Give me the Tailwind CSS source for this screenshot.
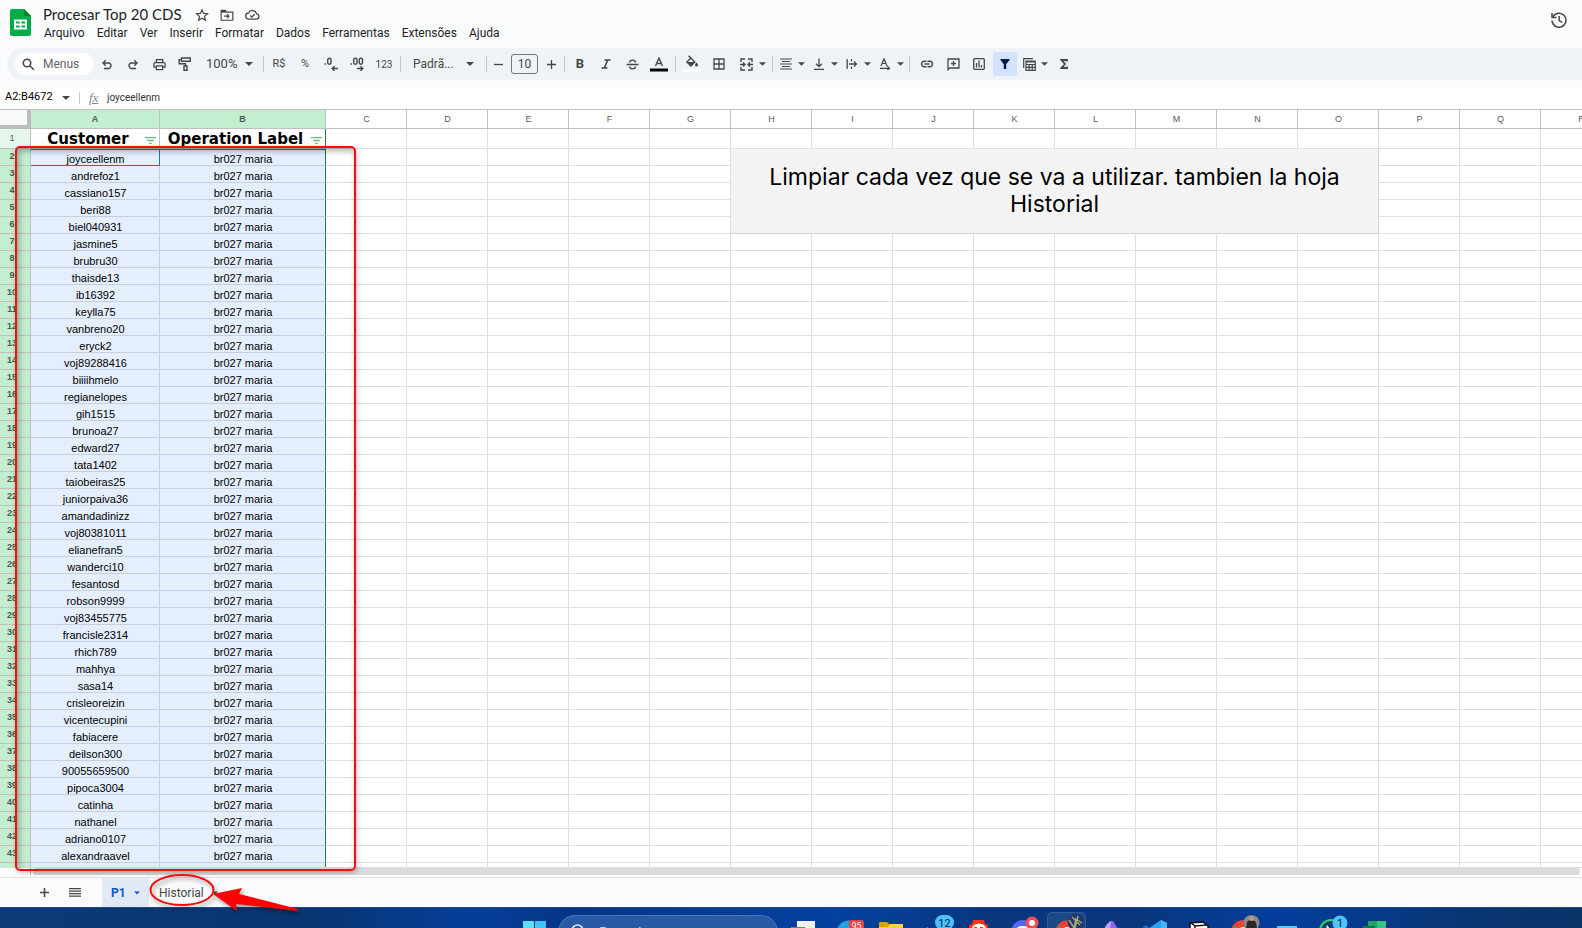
<!DOCTYPE html>
<html lang="pt-BR">
<head>
<meta charset="utf-8">
<title>Procesar Top 20 CDS</title>
<script src="https://cdn.jsdelivr.net/npm/@tailwindcss/browser@4"></script>
</head>
<body class="flex h-screen flex-col overflow-hidden bg-[#f9fbfd] font-['Roboto','Noto_Sans',sans-serif] text-[#444746]">

<svg class="hidden" aria-hidden="true">
  <symbol id="caret" viewBox="0 0 8 4"><path d="M0 0h8L4 4z" fill="currentColor"/></symbol>
  <symbol id="undo" viewBox="0 0 24 24"><path fill="currentColor" d="M7 21v-2.400h7.100q1.500 0 2.500-1t1-2.600-1-2.600-2.500-1H7.800l2.700 2.700L8.900 15.800 3.500 10.300 8.900 4.800l1.600 1.600L7.800 9.100h6.300q2.500 0 4.200 1.700T20 15t-1.700 4.300T14.100 21z"/></symbol>
  <symbol id="print" viewBox="0 0 24 24"><path fill="currentColor" d="M19 8h-1V3H6v5H5c-1.660 0-3 1.340-3 3v6h4v4h12v-4h4v-6c0-1.660-1.340-3-3-3zM8 5h8v3H8V5zm8 12v2H8v-4h8v2zm2-2v-2H6v2H4v-4c0-.55.45-1 1-1h14c.55 0 1 .45 1 1v4h-2z"/></symbol>
</svg>

<header class="flex h-12 shrink-0 items-start pl-[10px] pr-[15px]">
  <svg class="mt-[9px] h-[27px] w-[21px]" viewBox="0 0 21 27" role="img" aria-label="Planilhas"><path d="M2 0h12l7 7v18a2 2 0 0 1-2 2H2a2 2 0 0 1-2-2V2a2 2 0 0 1 2-2z" fill="#00ac47"/><path d="M14 0l7 7h-7z" fill="#00832d"/><path d="M4 10.500h13v10H4z" fill="#fff"/><path d="M6 12.500h3.700v2H6zm5.300 0H15v2h-3.700zM6 16.500h3.700v2H6zm5.300 0H15v2h-3.700z" fill="#00ac47"/></svg>
  <div class="flex flex-col pl-3 pt-1">
    <div class="flex h-5 items-center">
      <h1 class="w-[152px] font-[Lato,sans-serif] text-[15px] leading-5 text-[#1f1f1f]">Procesar Top 20 CDS</h1>
      <div class="flex items-center gap-[11px] pt-px">
        <button aria-label="Marcar com estrela"><svg class="block size-[14px]" viewBox="0 0 24 24" fill="none" stroke="currentColor" stroke-width="2"><path d="M12 3l2.600 6.300 6.900.6-5.200 4.500 1.600 6.700L12 17.500l-5.900 3.600 1.600-6.700L2.500 9.900l6.900-.6z"/></svg></button>
        <button aria-label="Mover"><svg class="block size-[14px]" viewBox="0 0 24 24" fill="none" stroke="currentColor" stroke-width="2"><path d="M2 4h7l2 3h11v14H2z"/><path d="M2 6h8" stroke-width="4"/><path d="M7 14h8M12 10.500l3.500 3.500-3.500 3.500"/></svg></button>
        <button aria-label="Ver status do documento"><svg class="block size-[15px]" viewBox="0 0 24 24" fill="none" stroke="currentColor" stroke-width="2"><path d="M6.500 19.500a5 5 0 0 1-.8-10A6.800 6.800 0 0 1 18.500 11a4.300 4.300 0 0 1 .3 8.500z"/><path d="M8.500 13.500l2.500 2.500 4.500-4.500"/></svg></button>
      </div>
    </div>
    <nav class="flex gap-3 pl-px text-[12px] leading-[19px] text-[#1f1f1f]">
      <button>Arquivo</button><button>Editar</button><button>Ver</button><button>Inserir</button><button>Formatar</button><button>Dados</button><button>Ferramentas</button><button>Extensões</button><button>Ajuda</button>
    </nav>
  </div>
  <button class="ml-auto mt-3" aria-label="Histórico de versões"><svg class="block size-4" viewBox="0 0 16 16" fill="none" stroke="currentColor" stroke-width="1.500"><path d="M1.800 5A7 7 0 1 1 1 8.500"/><path d="M1 1v4.500h4.500"/><path d="M8.200 4v4.500l3 2"/></svg></button>
</header>

<div class="ml-[7px] flex h-8 shrink-0 items-center rounded-l-full bg-[#eff3f8] pl-[7px] text-[12px]" role="toolbar" aria-label="Ferramentas">
  <label class="flex h-[22px] w-20 items-center gap-2 rounded-full bg-white pl-2">
    <svg class="size-[13px] shrink-0" viewBox="0 0 13 13" fill="none" stroke="currentColor" stroke-width="1.600"><circle cx="5" cy="5" r="3.700"/><path d="M7.800 7.800l4 4"/></svg>
    <input class="w-12 outline-none placeholder:text-[#5f6368]" placeholder="Menus" aria-label="Menus">
  </label>
  <div class="flex items-center">
    <button class="grid h-6 w-[26px] place-items-center" aria-label="Desfazer"><svg class="size-[14px]"><use href="#undo"/></svg></button>
    <button class="grid h-6 w-[26px] place-items-center" aria-label="Refazer"><svg class="size-[14px] -scale-x-100"><use href="#undo"/></svg></button>
    <button class="grid h-6 w-[26px] place-items-center" aria-label="Imprimir"><svg class="size-[15px]"><use href="#print"/></svg></button>
    <button class="grid h-6 w-[26px] place-items-center" aria-label="Pintar formatação"><svg class="size-[14px]" viewBox="0 0 14 14" fill="none" stroke="currentColor" stroke-width="1.400"><path d="M3.500 1h8.800v3.300H3.500zM3.500 2.600H1.200v4.200h6.300V9"/><path d="M6 9h3v4.300H6z"/></svg></button>
    <button class="flex h-6 w-[63px] items-center justify-between px-2 text-[13px]" aria-haspopup="listbox">100%<svg class="h-1 w-2"><use href="#caret"/></svg></button>
  </div>
  <span class="mx-[2px] h-4 w-px bg-[#c7c7c7]"></span>
  <div class="flex items-center text-[11px]">
    <button class="h-6 w-[26px]">R$</button>
    <button class="h-6 w-[26px]">%</button>
    <button class="grid h-6 w-[26px] place-items-center" aria-label="Diminuir casas decimais"><svg class="h-[14px] w-4" viewBox="0 0 16 14" fill="none" stroke="currentColor" stroke-width="1.400"><path d="M1.500 7h1.500"/><rect x="4.700" y="1.200" width="3.300" height="6" rx="1.600"/><path d="M15 11.500H9.500M11.500 9.200L9.200 11.500l2.300 2.300"/></svg></button>
    <button class="grid h-6 w-[26px] place-items-center" aria-label="Aumentar casas decimais"><svg class="h-[14px] w-4" viewBox="0 0 16 14" fill="none" stroke="currentColor" stroke-width="1.400"><path d="M1.500 7h1.500"/><rect x="4.700" y="1.200" width="3.300" height="6" rx="1.600"/><rect x="10.200" y="1.200" width="3.300" height="6" rx="1.600"/><path d="M8 11.500h5.500M11.500 9.200l2.300 2.300-2.300 2.300"/></svg></button>
    <button class="h-6 w-[28px] text-[10px]">123</button>
  </div>
  <span class="mx-[2px] h-4 w-px bg-[#c7c7c7]"></span>
  <button class="flex h-6 w-[81px] items-center justify-between px-[10px] text-[12px]" aria-haspopup="listbox">Padrã...<svg class="h-1 w-2"><use href="#caret"/></svg></button>
  <span class="mx-[2px] h-4 w-px bg-[#c7c7c7]"></span>
  <button class="grid h-6 w-[19px] place-items-center" aria-label="Diminuir fonte"><svg class="size-[9px]" viewBox="0 0 9 9" stroke="currentColor" stroke-width="1.300"><path d="M0 4.500h9"/></svg></button>
  <input class="mx-[3px] h-5 w-[27px] rounded-[3px] border border-[#747775] text-center text-[12px] text-[#444746] outline-none" value="10" aria-label="Tamanho da fonte">
  <button class="grid h-6 w-[21px] place-items-center" aria-label="Aumentar fonte"><svg class="size-[9px]" viewBox="0 0 9 9" stroke="currentColor" stroke-width="1.300"><path d="M0 4.500h9M4.500 0v9"/></svg></button>
  <span class="mx-[2px] h-4 w-px bg-[#c7c7c7]"></span>
  <button class="h-6 w-[26px] text-[13px] font-bold" aria-label="Negrito">B</button>
  <button class="grid h-6 w-[26px] place-items-center" aria-label="Itálico"><svg class="size-[10px]" viewBox="0 0 10 10" fill="none" stroke="currentColor" stroke-width="1.700"><path d="M3.500 1h6M.5 9h6M6.700 1L3.300 9"/></svg></button>
  <button class="grid h-6 w-[26px] place-items-center" aria-label="Tachado"><svg class="h-[11px] w-[13px]" viewBox="0 0 12 11" fill="none" stroke="currentColor" stroke-width="1.400"><path d="M0 5.500h12M9 3.500C8.800.3 3.200.3 3 3.500M3 7.500c.2 3.200 5.800 3.200 6 0"/></svg></button>
  <button class="grid h-6 w-[28px] place-items-center" aria-label="Cor do texto"><svg class="h-[15px] w-[18px]" viewBox="0 0 18 15"><path d="M5.500 9L9 1l3.500 8M6.700 6.500h4.600" fill="none" stroke="currentColor" stroke-width="1.400"/><path d="M0 11.500h18v3H0z" fill="#000"/></svg></button>
  <span class="mx-[2px] h-4 w-px bg-[#c7c7c7]"></span>
  <button class="grid h-6 w-[28px] place-items-center" aria-label="Cor de preenchimento"><svg class="h-[18px] w-[18px]" viewBox="0 0 18 18"><path d="M5.500.8l6.300 6.300-3.900 3.900L3.900 7.100 8 3" fill="none" stroke="currentColor" stroke-width="1.400"/><path d="M4 7h7.500L8 10.800z" fill="currentColor"/><path d="M13.500 7.500s1.500 1.700 1.500 2.500a1.500 1.500 0 0 1-3 0c0-.8 1.500-2.500 1.500-2.500z" fill="currentColor"/><path d="M0 14h18v3H0z" fill="#fff"/></svg></button>
  <button class="grid h-6 w-[26px] place-items-center" aria-label="Bordas"><svg class="size-3" viewBox="0 0 12 12" fill="none" stroke="currentColor" stroke-width="1.300"><path d="M1 1h10v10H1zM6 1v10M1 6h10"/></svg></button>
  <button class="flex h-6 w-[38px] items-center gap-[6px] pl-2" aria-label="Mesclar células"><svg class="size-[13px]" viewBox="0 0 13 13" fill="none" stroke="currentColor" stroke-width="1.400"><path d="M1 4V1h4M8 1h4v3M1 9v3h4M8 12h4V9M0 6.500h4.500M13 6.500H8.500M3 4.500l2 2-2 2M10 4.500l-2 2 2 2"/></svg><svg class="h-1 w-[7px]"><use href="#caret"/></svg></button>
  <span class="mx-[2px] h-4 w-px bg-[#c7c7c7]"></span>
  <button class="flex h-6 w-[33px] items-center gap-[6px] pl-[5px]" aria-label="Alinhamento horizontal"><svg class="size-3" viewBox="0 0 12 12" stroke="currentColor" stroke-width="1.200"><path d="M0 1h12M2 3.500h8M0 6h12M2 8.500h8M0 11h12"/></svg><svg class="h-1 w-[7px]"><use href="#caret"/></svg></button>
  <button class="flex h-6 w-[33px] items-center gap-[6px] pl-[5px]" aria-label="Alinhamento vertical"><svg class="size-3" viewBox="0 0 12 12" fill="none" stroke="currentColor" stroke-width="1.300"><path d="M1 11.300h10M6 .5v8M3 5.700l3 3 3-3"/></svg><svg class="h-1 w-[7px]"><use href="#caret"/></svg></button>
  <button class="flex h-6 w-[33px] items-center gap-[6px] pl-[5px]" aria-label="Ajuste do texto"><svg class="size-3" viewBox="0 0 12 12" fill="none" stroke="currentColor" stroke-width="1.300"><path d="M1.200 1v10M5.500 1v2.500M5.500 8.500V11M3 6h7.500M8 3.500L10.500 6 8 8.500"/></svg><svg class="h-1 w-[7px]"><use href="#caret"/></svg></button>
  <button class="flex h-6 w-[33px] items-center gap-[6px] pl-[5px]" aria-label="Rotação do texto"><svg class="size-3" viewBox="0 0 12 12" fill="none" stroke="currentColor" stroke-width="1.200"><path d="M2 8L5 .8 8 8M3 5.500h4M1 10.300h9M8.300 8.300l2.200 2-2.200 2"/></svg><svg class="h-1 w-[7px]"><use href="#caret"/></svg></button>
  <span class="mx-[2px] h-4 w-px bg-[#c7c7c7]"></span>
  <div class="flex items-center pl-[2px]">
    <button class="grid h-6 w-[26px] place-items-center" aria-label="Inserir link"><svg class="h-2 w-[14px]" viewBox="0 0 13 8" fill="none" stroke="currentColor" stroke-width="1.400"><path d="M6 1.200H3.800a2.800 2.800 0 0 0 0 5.600H6M7 1.200h2.200a2.800 2.800 0 0 1 0 5.600H7M4 4h5"/></svg></button>
    <button class="grid h-6 w-[26px] place-items-center" aria-label="Inserir comentário"><svg class="size-[13px]" viewBox="0 0 13 13" fill="none" stroke="currentColor" stroke-width="1.300"><path d="M1 11.700V1h11v9H2.700zM6.500 3v5M4 5.500h5"/></svg></button>
    <button class="grid h-6 w-[26px] place-items-center" aria-label="Inserir gráfico"><svg class="size-3" viewBox="0 0 12 12" fill="none" stroke="currentColor" stroke-width="1.300"><rect x=".7" y=".7" width="10.600" height="10.600" rx="1"/><path d="M3.500 5v4.500M6 2.500v7M8.500 7v2.500"/></svg></button>
    <button class="mx-px grid size-6 place-items-center rounded-[3px] bg-[#d3e3fd] text-[#041e49]" aria-label="Remover filtro" aria-pressed="true"><svg class="size-[10px]" viewBox="0 0 10 10"><path d="M.5 0h9v1L6.200 5.200V10H3.800V5.200L.5 1z" fill="currentColor"/></svg></button>
    <button class="flex h-6 w-[33px] items-center gap-[5px] pl-[5px]" aria-label="Visualizações de tabela"><svg class="size-[13px]" viewBox="0 0 13 13" fill="none" stroke="currentColor" stroke-width="1.200"><path d="M.7 10V.7H10M3 3h9.300v9.300H3zM3 6.500h9.300M3 9.400h9.300M6.100 6.500v6M9.200 6.500v6M3 4h9"/></svg><svg class="h-1 w-[7px]"><use href="#caret"/></svg></button>
    <button class="grid h-6 w-[26px] place-items-center" aria-label="Funções"><svg class="h-[10px] w-2" viewBox="0 0 8 10" fill="none" stroke="currentColor" stroke-width="1.800"><path d="M7 2.500V1H1.500L5 5 1.500 9H7V7.500"/></svg></button>
  </div>
</div>

<div class="mt-[7px] flex h-[22px] shrink-0 items-center bg-white pb-px pl-[5px]">
  <input class="w-[57px] text-[11px] text-black outline-none" value="A2:B4672" aria-label="Caixa de nome">
  <svg class="h-1 w-2"><use href="#caret"/></svg>
  <span class="ml-[9px] h-3 w-px bg-[#c7c7c7]"></span>
  <span class="ml-[9px] w-[18px] font-['Liberation_Serif',serif] text-[13px] italic leading-4 text-[#80868b] underline">fx</span>
  <input class="flex-1 text-[10px] text-[#333] outline-none" value="joyceellenm" aria-label="Barra de fórmulas">
</div>

<main class="relative min-h-0 flex-1 border-t border-[#c0c0c0] bg-white">
  <div class="h-full overflow-hidden">
    <table class="w-[1622px] table-fixed border-separate border-spacing-0 text-center">
      <colgroup id="cols"><col class="w-[31px]"><col class="w-[129px]"><col class="w-[166px]"></colgroup>
      <thead><tr id="letters" class="h-[19px] font-['Liberation_Sans',sans-serif] text-[9px] leading-3 text-[#575a5a]">
        <th class="border-b-4 border-r-4 border-[#bdbdbd] bg-[#f8f9fa]"></th>
        <th class="border-b border-r border-[#c0c0c0] bg-[#c3eecf] font-bold">A</th>
        <th class="border-b border-r border-[#c0c0c0] bg-[#c3eecf] font-bold">B</th>
      </tr></thead>
      <tbody id="rows"></tbody>
    </table>
  </div>
  <div class="pointer-events-none absolute -bottom-1 left-[15px] top-9 z-10 w-[341px] rounded-[5px] border-2 border-[#f80d0d] shadow-[inset_2px_3px_6px_#00000050,1px_2px_5px_#00000040]"></div>
</main>

<div class="h-[10px] shrink-0 border-t border-[#dadce0] bg-white pl-[30px]"><div class="mr-[2px] h-[7px] border-l border-[#c0c0c0] pl-[2px]"><div class="h-full rounded-full bg-[#dadbde]"></div></div></div>

<footer class="relative flex h-[30px] shrink-0 items-center border-t border-[#dfe1e4] bg-[#f9fbfd] pl-[32px]">
  <button class="grid h-full w-6 place-items-center" aria-label="Adicionar página"><svg class="size-[9px]" viewBox="0 0 9 9" stroke="currentColor" stroke-width="1.500"><path d="M0 4.500h9M4.500 0v9"/></svg></button>
  <button class="ml-[7px] grid h-full w-6 place-items-center" aria-label="Todas as páginas"><svg class="h-[9px] w-3" viewBox="0 0 12 9" stroke="currentColor" stroke-width="1.300"><path d="M0 .7h12M0 3.200h12M0 5.700h12M0 8.200h12"/></svg></button>
  <button class="ml-[15px] flex h-full w-[47px] items-center gap-2 bg-[#e1e9f7] pl-[9px] text-[12px] font-bold text-[#0b57d0]">P1<svg class="h-1 w-[6px]"><use href="#caret"/></svg></button>
  <button class="flex h-full items-center gap-2 pl-[10px] text-[12px]">Historial<svg class="h-1 w-[6px]"><use href="#caret"/></svg></button>
  <svg class="pointer-events-none absolute -top-2 left-[145px] z-10 h-[50px] w-[160px] drop-shadow-[2px_3px_2px_#00000060]" viewBox="145 870 160 50" aria-hidden="true"><ellipse cx="182" cy="890" rx="31.500" ry="15" fill="none" stroke="#f80d0d" stroke-width="2"/><path d="M213 894l29-6-3 6 59 15-1 2-61-7 1 7z" fill="#ff0000"/></svg>
</footer>

<div class="flex h-[21px] shrink-0 overflow-hidden border-t border-[#24487c] bg-[linear-gradient(90deg,#0a3a78_0%,#083672_20%,#053e9a_30%,#063585_36%,#0442a0_53%,#08377e_62%,#08377e_72%,#033d9c_81%,#083878_91%,#0a3368_100%)]">
  <div class="ml-[33%] flex h-[21px] shrink-0" role="group" aria-label="Barra de tarefas">
    <button class="w-9" aria-label="Iniciar"><svg class="block h-5 w-9" viewBox="0 0 36 20"><path d="M1 12h11v8H1z" fill="#5fdcfb"/><path d="M13 12h11v8H13z" fill="#43c4f7"/></svg></button>
    <label class="mt-[7px] flex h-[34px] w-[220px] items-start gap-[13px] rounded-full border border-[#4b77b8] bg-[#2a59a6] pl-3 pt-2"><svg class="size-[15px] shrink-0" viewBox="0 0 15 15" fill="none" stroke="#dfe8f5" stroke-width="1.600"><circle cx="6.500" cy="6.500" r="5.500"/><path d="M10.500 10.500l4 4"/></svg><input class="w-32 bg-transparent text-[14px] leading-[18px] outline-none placeholder:text-[#c9d7ee]" placeholder="Pesquisar" aria-label="Pesquisar"></label>
    <div class="flex pl-1">
      <button aria-label="Visão de tarefas"><svg class="block h-5 w-11" viewBox="782 908 44 20"><path d="M797 920h18v8h-18z" fill="#f2f2f2"/><path d="M791 926h14v2h-14z" fill="#7c7c7c"/></svg></button>
      <button aria-label="Edge, 95 notificações"><svg class="block h-5 w-11" viewBox="826 908 44 20"><circle cx="849" cy="932" r="12.500" fill="#2b9fe0"/><rect x="849" y="919" width="15" height="13" rx="3" fill="#f23f3f"/><text x="856.500" y="928" text-anchor="middle" font-size="9" fill="#fff" font-family="Roboto">95</text></svg></button>
      <button aria-label="Explorador de arquivos"><svg class="block h-5 w-11" viewBox="870 908 44 20"><path d="M879 922a1 1 0 0 1 1-1h7l2 2h13a1 1 0 0 1 1 1v4h-24z" fill="#e0a106"/><path d="M879 926h9l2-3h13v5h-24z" fill="#ffd04f"/></svg></button>
      <button aria-label="12 notificações"><svg class="block h-5 w-11" viewBox="914 908 44 20"><path d="M924 928l4-2v2z" fill="#2b9fe0"/><rect x="935" y="914" width="19" height="15" rx="7.500" fill="#4cc2ff"/><text x="944.500" y="926" text-anchor="middle" font-size="11" fill="#0b2340" font-family="Roboto">12</text></svg></button>
      <button aria-label="Aplicativo vermelho"><svg class="block h-5 w-11" viewBox="958 908 44 20"><path d="M969 928v-4l3-1 1-4h11l1 4 3 1v4z" fill="#ff3212"/><path d="M972 928c0-7 14-7 14 0z" fill="#fff"/><path d="M974 926h3v2h-3zm6 0h3v2h-3z" fill="#ff3212"/></svg></button>
      <button aria-label="Discord"><svg class="block h-5 w-11" viewBox="1002 908 44 20"><circle cx="1023" cy="931" r="12" fill="#5865f2"/><path d="M1016 928c2-4 11-4 14 0z" fill="#fff"/><circle cx="1032" cy="922" r="6.500" fill="#ee4f50"/><circle cx="1032" cy="922" r="3" fill="#fff"/></svg></button>
      <button aria-label="Chrome"><svg class="block h-5 w-11" viewBox="1046 908 44 20"><rect x="1047.500" y="911.500" width="38" height="30" rx="4" fill="#29538f" fill-opacity=".6" stroke="#315b95"/><circle cx="1067" cy="931" r="11.500" fill="#ea4335"/><path d="M1056 928l3-3 4 3z" fill="#30a852"/><path d="M1063 928a5 5 0 0 1 8 0z" fill="#fff"/><circle cx="1075.500" cy="921" r="8" fill="#26346c"/><path d="M1069 919l5 8 2-9 6 4M1072 916l8 8M1078 915l-3 12" stroke="#a2a777" stroke-width="1.500" fill="none"/></svg></button>
      <button aria-label="Obsidian"><svg class="block h-5 w-11" viewBox="1090 908 44 20"><path d="M1104 928l6-8h3l5 8z" fill="#8e62ea"/><path d="M1111 920l-1 8-6 0 3-5z" fill="#c0a5fb"/></svg></button>
      <button aria-label="Visual Studio Code"><svg class="block h-5 w-11" viewBox="1134 908 44 20"><path d="M1148 928l13-9 6 3v6z" fill="#2aa4ee"/><path d="M1143 926l3-2 5 4h-7z" fill="#0879c4"/><path d="M1161 919l6 3v6h-6z" fill="#48b5f7"/></svg></button>
      <button aria-label="Notion"><svg class="block h-5 w-11" viewBox="1178 908 44 20"><path d="M1190 922l13-1 5 4v4h-18z" fill="#fff" stroke="#111" stroke-width="1.500"/><path d="M1191 922l4 3 12-1M1195 925v3" stroke="#111" stroke-width="1.500" fill="none"/></svg></button>
      <button aria-label="Chrome, segundo perfil"><svg class="block h-5 w-11" viewBox="1222 908 44 20"><circle cx="1243" cy="931" r="12" fill="#ea4335"/><path d="M1232 928l3-3 4 3z" fill="#30a852"/><path d="M1239 928a5 5 0 0 1 8 0z" fill="#fff"/><circle cx="1251.500" cy="922" r="8" fill="#8c8a88"/><path d="M1246 928l1-7 4-3 5 3 1 7z" fill="#28282b"/><circle cx="1251.500" cy="917.500" r="2.500" fill="#b99a88"/></svg></button>
      <button aria-label="Bloco de notas"><svg class="block h-5 w-11" viewBox="1266 908 44 20"><path d="M1277 925h20v3h-20z" fill="#5ac8f5"/><path d="M1279 927h16v1h-16z" fill="#fff"/></svg></button>
      <button aria-label="WhatsApp, 1 notificação"><svg class="block h-5 w-11" viewBox="1310 908 44 20"><circle cx="1331" cy="930" r="11" fill="#0d3f72" stroke="#25d366" stroke-width="2"/><path d="M1327 924l3 4h-4z" fill="#fff"/><circle cx="1340" cy="922" r="7.500" fill="#4cc2ff"/><text x="1340" y="926" text-anchor="middle" font-size="11" fill="#0b2340" font-family="Roboto">1</text></svg></button>
      <button aria-label="Excel"><svg class="block h-5 w-11" viewBox="1354 908 44 20"><path d="M1368 920h9v8h-9z" fill="#21a366"/><path d="M1377 920h9v8h-9z" fill="#33c481"/><path d="M1363 925h12v3h-12z" fill="#107c41"/></svg></button>
    </div>
  </div>
</div>

<script>
const names = ["joyceellenm","andrefoz1","cassiano157","beri88","biel040931","jasmine5","brubru30","thaisde13","ib16392","keylla75","vanbreno20","eryck2","voj89288416","biiiihmelo","regianelopes","gih1515","brunoa27","edward27","tata1402","taiobeiras25","juniorpaiva36","amandadinizz","voj80381011","elianefran5","wanderci10","fesantosd","robson9999","voj83455775","francisle2314","rhich789","mahhya","sasa14","crisleoreizin","vicentecupini","fabiacere","deilson300","90055659500","pipoca3004","catinha","nathanel","adriano0107","alexandraavel"];
const letters = [..."CDEFGHIJKLMNOPQR"];
document.getElementById("cols").insertAdjacentHTML("beforeend", letters.map(() => '<col class="w-[81px]">').join(""));
document.getElementById("letters").insertAdjacentHTML("beforeend", letters.map(l => `<th class="border-b border-r border-[#c0c0c0] p-0 pl-px font-normal">${l}</th>`).join(""));

const empty = '<td class="border-b border-r border-[#e0e0e0]"></td>';
const filter = '<button class="shrink-0 pt-1" aria-label="Filtrar"><svg class="block h-[7px] w-[11px]" viewBox="0 0 11 7" stroke="#70b582" stroke-width="1.300"><path d="M0 .7h11M2.300 3.500h6.400M4.200 6.300h2.600"/></svg></button>';
let html = `<tr class="h-5 text-[#575a5a]">
  <th class="border-b border-r border-[#c0c0c0] bg-[#e6f6ea] p-0 pb-px pr-[6px] text-[9px] leading-3 font-['Liberation_Sans',sans-serif] font-normal">1</th>
  <td class="border-b border-r border-[#c0c0c0] p-0 text-[15px] leading-[18px] font-['DejaVu_Sans',sans-serif] font-bold text-black"><div class="flex items-center justify-end pr-[3px]"><span class="flex-1">Customer</span>${filter}</div></td>
  <td class="border-b border-[#c0c0c0] border-r border-r-[#188038] p-0 text-[15px] leading-[18px] font-['DejaVu_Sans',sans-serif] font-bold text-black"><div class="flex items-center justify-end pr-[3px]"><span class="flex-1">Operation Label</span>${filter}</div></td>
  ${empty.repeat(16)}</tr>`;
for (let n = 2; n <= 44; n++) {
  const name = names[n - 2] || "";
  const a = n === 2
    ? "border-b border-r border-[#1a73e8] shadow-[inset_0_1px_#1a73e8]"
    : "border-b border-r border-[#c6cfdf]";
  const b = n === 2 ? "shadow-[inset_0_1px_#1a73e8]" : "";
  let rest = empty.repeat(16);
  if (n >= 2 && n <= 6) {
    const note = n === 2 ? `<td colspan="8" rowspan="5" class="border-b border-r border-[#d5d5d5] bg-[#f3f3f3] p-0 align-middle font-[Inter,sans-serif] text-[23px] leading-[27px] text-black">Limpiar cada vez que se va a utilizar. tambien la hoja<br>Historial</td>` : "";
    rest = empty.repeat(5) + note + empty.repeat(3);
  }
  html += `<tr class="h-[17px] font-['Liberation_Sans',sans-serif]">
    <th class="border-b border-r border-[#c0c0c0] bg-[#c3eecf] p-0 pb-[2px] pr-[6px] text-[9px] leading-3 font-bold text-[#4d5a50]">${n < 44 ? n : ""}</th>
    <td class="${a} bg-[#e5eefd] p-0 pl-px pt-1 text-[11px] leading-3 text-black">${name}</td>
    <td class="${b} border-b border-[#c6cfdf] border-r border-r-[#188038] bg-[#e5eefd] p-0 pl-px pt-1 text-[11px] leading-3 text-black">${name ? "br027 maria" : ""}</td>
    ${rest}</tr>`;
}
document.getElementById("rows").innerHTML = html;
</script>
</body>
</html>
